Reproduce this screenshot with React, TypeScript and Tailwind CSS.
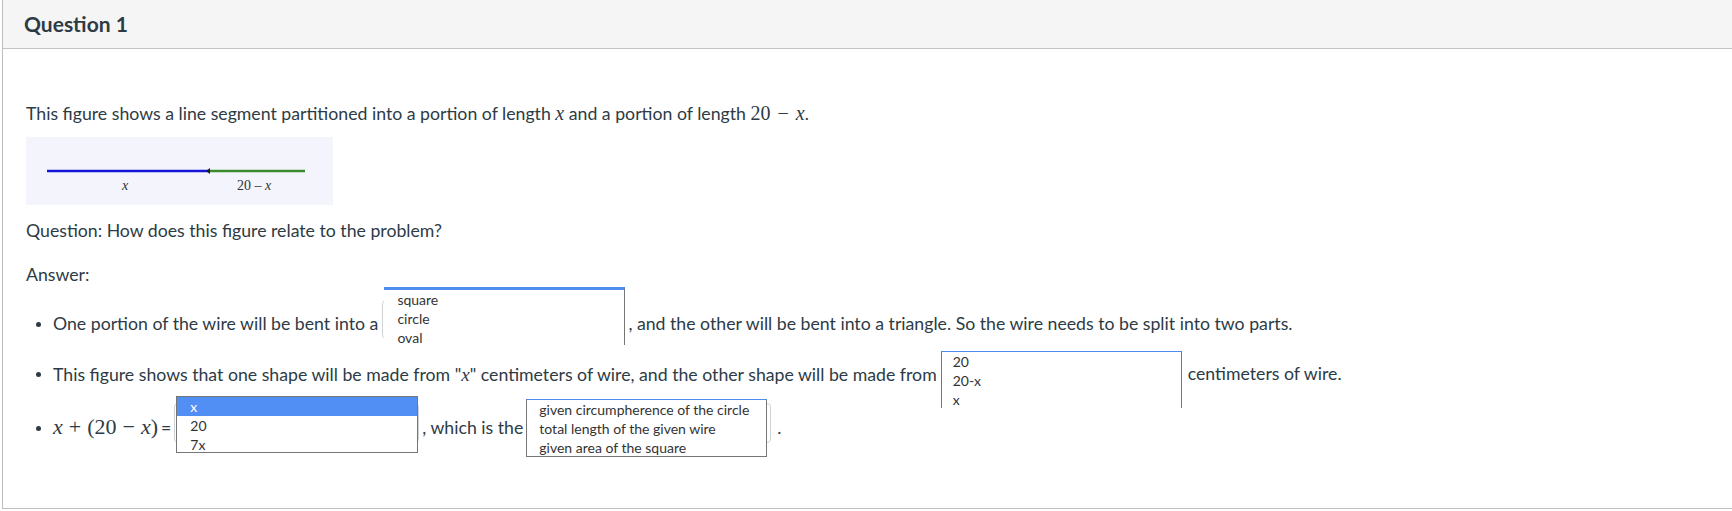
import React from "react";

const TEXT = "text-[#2d3b45]";

function X() {
  return <i className="font-['Liberation_Serif',serif]">x</i>;
}

function Dot({ top }: { top: string }) {
  return (
    <span className={`${top} h-[24px] ml-[10px] mr-[12px] flex items-center shrink-0`}>
      <span className="w-[5px] h-[5px] rounded-full bg-[#2d3b45]" />
    </span>
  );
}

function Figure() {
  return (
    <div className="mt-[11px] w-[307px] h-[68px] bg-[#f4f4fc]">
      <svg width="307" height="68" viewBox="0 0 307 68">
        <line x1="21" y1="34" x2="182" y2="34" stroke="#1515d8" strokeWidth="2.6" />
        <line x1="182" y1="34" x2="279" y2="34" stroke="#3b8a2b" strokeWidth="2.6" />
        <path d="M180 34 L184 31 L184 37 Z" fill="#1d1d1d" />
        <text x="99" y="53" textAnchor="middle" fontFamily="Liberation Serif" fontStyle="italic" fontSize="14" fill="#333">
          x
        </text>
        <text x="211" y="53" fontFamily="Liberation Serif" fontSize="14" fill="#333">
          20 – <tspan fontStyle="italic">x</tspan>
        </text>
      </svg>
    </div>
  );
}

export default function App() {
  return (
    <div className={`w-[1760px] h-[509px] ml-[2px] border-l border-b border-[#bdbdbd] bg-white font-['Lato',sans-serif] ${TEXT}`}>
      <div className="h-[49px] bg-[#f5f5f5] border-b border-[#c3c3c3] flex items-center pl-[21px]">
        <h2 className="text-[21px] font-bold">Question 1</h2>
      </div>

      <div className="pl-[23px] text-[17.7px] leading-[24px]">
        <p className="mt-[51px]">
          This figure shows a line segment partitioned into a portion of length{" "}
          <span className="text-[20px]">
            <X />
          </span>{" "}
          and a portion of length{" "}
          <span className="font-['Liberation_Serif',serif] text-[20px]">
            20<span className="mx-[7px]">−</span>
            <X />
          </span>
          .
        </p>

        <Figure />

        <p className="mt-[14px]">Question: How does this figure relate to the problem?</p>
        <p className="mt-[20px]">Answer:</p>

        <ul>
          <li className="flex items-start mt-[13px]">
            <Dot top="mt-[12px]" />
            <span className="mt-[12px] whitespace-nowrap">One portion of the wire will be bent into a</span>
            <span className="relative shrink-0 ml-[4px] w-[243px] h-[39px] rounded-[4px] border border-[#cfd3d6] bg-white">
              <span className="absolute top-[-14px] left-[1px] w-[241px] h-[58px] overflow-hidden bg-white border-t-[3px] border-t-[#4d8df0] border-r border-r-[#767676] pl-[13px] text-[14px] leading-[19px] text-[#333]">
                <span className="block">square</span>
                <span className="block">circle</span>
                <span className="block">oval</span>
              </span>
            </span>
            <span className="mt-[12px] ml-[3px] whitespace-nowrap">
              , and the other will be bent into a triangle. So the wire needs to be split into two parts.
            </span>
          </li>

          <li className="flex items-start mt-[15px]">
            <Dot top="mt-[8px]" />
            <span className="mt-[8px] whitespace-nowrap">
              This figure shows that one shape will be made from "
              <span className="text-[19px]">
                <X />
              </span>
              " centimeters of wire, and the other shape will be made from
            </span>
            <span className="relative shrink-0 ml-[4px] w-[240px] h-[40px] rounded-[4px] border border-[#cfd3d6] bg-white">
              <span className="absolute top-[-4px] left-[-1px] w-[241px] h-[57px] overflow-hidden bg-white border-x border-x-[#767676] border-t border-t-[#4d8df0] pl-[11px] text-[14px] leading-[19px] text-[#333]">
                <span className="block">20</span>
                <span className="block">20-x</span>
                <span className="block">x</span>
              </span>
            </span>
            <span className="mt-[8px] ml-[7px] whitespace-nowrap">centimeters of wire.</span>
          </li>

          <li className="flex items-start mt-[9px]">
            <Dot top="mt-[13px]" />
            <span className="mt-[11px] whitespace-nowrap font-['Liberation_Serif',serif] text-[22px] leading-[26px]">
              <i>x</i>
              <span className="mx-[6px]">+</span>
              (20<span className="mx-[6px]">−</span>
              <i>x</i>)
            </span>
            <span className="mt-[13px] ml-[3px]">=</span>
            <span className="relative shrink-0 ml-[3px] w-[245px] h-[40px] rounded-[4px] border border-[#cfd3d6] bg-white">
              <span className="absolute top-[-8px] left-[1px] w-[242px] h-[57px] overflow-hidden bg-white border border-[#767676] text-[14px] leading-[19px] text-[#333]">
                <span className="block pl-[13px] bg-[#528ff5] text-white">x</span>
                <span className="block pl-[13px]">20</span>
                <span className="block pl-[13px]">7x</span>
              </span>
            </span>
            <span className="mt-[13px] ml-[3px] whitespace-nowrap">, which is the</span>
            <span className="relative shrink-0 ml-[3px] w-[245px] h-[40px] rounded-[4px] border border-[#cfd3d6] bg-white">
              <span className="absolute top-[-5px] left-[-1px] w-[241px] h-[58px] overflow-hidden bg-white border border-[#767676] border-t-[#4d8df0] pl-[12px] text-[14px] leading-[19px] text-[#333]">
                <span className="block">given circumpherence of the circle</span>
                <span className="block">total length of the given wire</span>
                <span className="block">given area of the square</span>
              </span>
            </span>
            <span className="mt-[13px] ml-[6px]">.</span>
          </li>
        </ul>
      </div>
    </div>
  );
}
